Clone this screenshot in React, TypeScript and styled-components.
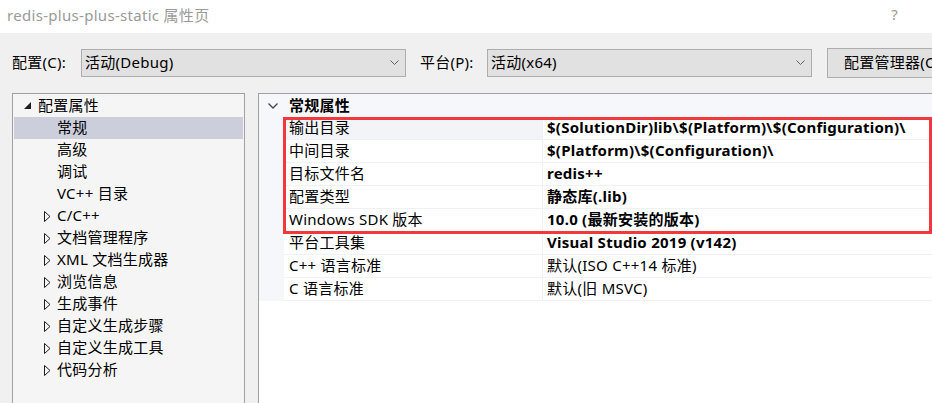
import React from "react";
import styled, { createGlobalStyle } from "styled-components";

const GlobalStyle = createGlobalStyle`
  html, body {
    margin: 0;
    padding: 0;
    background: #f0f0f0;
  }
  body {
    font-family: "Noto Sans", "Noto Sans CJK SC", sans-serif;
    font-size: 15px;
    letter-spacing: 0.25px;
    color: #000;
  }
`;

interface TreeItem {
  label: string;
  level: number;
  state: "open" | "closed" | "leaf";
  selected?: boolean;
}

interface Prop {
  name: string;
  value: string;
  custom?: boolean;
}

const treeItems: TreeItem[] = [
  { label: "配置属性", level: 0, state: "open" },
  { label: "常规", level: 1, state: "leaf", selected: true },
  { label: "高级", level: 1, state: "leaf" },
  { label: "调试", level: 1, state: "leaf" },
  { label: "VC++ 目录", level: 1, state: "leaf" },
  { label: "C/C++", level: 1, state: "closed" },
  { label: "文档管理程序", level: 1, state: "closed" },
  { label: "XML 文档生成器", level: 1, state: "closed" },
  { label: "浏览信息", level: 1, state: "closed" },
  { label: "生成事件", level: 1, state: "closed" },
  { label: "自定义生成步骤", level: 1, state: "closed" },
  { label: "自定义生成工具", level: 1, state: "closed" },
  { label: "代码分析", level: 1, state: "closed" },
];

const props: Prop[] = [
  { name: "输出目录", value: "$(SolutionDir)lib\\$(Platform)\\$(Configuration)\\", custom: true },
  { name: "中间目录", value: "$(Platform)\\$(Configuration)\\", custom: true },
  { name: "目标文件名", value: "redis++", custom: true },
  { name: "配置类型", value: "静态库(.lib)", custom: true },
  { name: "Windows SDK 版本", value: "10.0 (最新安装的版本)", custom: true },
  { name: "平台工具集", value: "Visual Studio 2019 (v142)", custom: true },
  { name: "C++ 语言标准", value: "默认(ISO C++14 标准)" },
  { name: "C 语言标准", value: "默认(旧 MSVC)" },
];

const SmallChevron = () => (
  <svg width="9" height="6" viewBox="0 0 9 6">
    <polyline points="0.5,0.5 4.5,4.5 8.5,0.5" fill="none" stroke="#606060" strokeWidth="1" />
  </svg>
);

const GroupChevron = () => (
  <svg width="10" height="6" viewBox="0 0 10 6">
    <polyline points="0.5,0.5 5,5 9.5,0.5" fill="none" stroke="#444" strokeWidth="1.3" />
  </svg>
);

const OpenArrow = () => (
  <svg width="8" height="8" viewBox="0 0 8 8">
    <polygon points="7,0 7,7 0,7" fill="#1e1e1e" />
  </svg>
);

const ClosedArrow = () => (
  <svg width="7" height="11" viewBox="0 0 7 11">
    <polygon points="0.5,0.5 6,5.5 0.5,10.5" fill="none" stroke="#1e1e1e" strokeWidth="1" />
  </svg>
);

const App: React.FC = () => {
  return (
    <Window>
      <GlobalStyle />
      <TitleBar>
        <Title>redis-plus-plus-static 属性页</Title>
        <Help>?</Help>
      </TitleBar>
      <Toolbar>
        <Label width={69}>配置(C):</Label>
        <Select>
          <Text>活动(Debug)</Text>
          <SmallChevron />
        </Select>
        <Label width={67} gap={14}>平台(P):</Label>
        <Select>
          <Text>活动(x64)</Text>
          <SmallChevron />
        </Select>
        <Button>
          <Text>配置管理器(O)...</Text>
        </Button>
      </Toolbar>
      <Body>
        <TreePanel>
          {treeItems.map((item) => (
            <TreeRow key={item.label} level={item.level} selected={item.selected}>
              <ArrowSlot>
                {item.state === "open" && <OpenArrow />}
                {item.state === "closed" && <ClosedArrow />}
              </ArrowSlot>
              <Text>{item.label}</Text>
            </TreeRow>
          ))}
        </TreePanel>
        <GridPanel>
          <Grid>
            <GroupRow>
              <Gutter>
                <GroupChevron />
              </Gutter>
              <GroupTitle>
                <Text>常规属性</Text>
              </GroupTitle>
            </GroupRow>
            {props.map((p, i) => (
              <PropRow key={p.name}>
                <Gutter />
                <NameCell active={i === 0}>
                  <Text>{p.name}</Text>
                </NameCell>
                <ValueCell custom={p.custom}>
                  <Text>{p.value}</Text>
                </ValueCell>
              </PropRow>
            ))}
          </Grid>
          <Highlight />
        </GridPanel>
      </Body>
    </Window>
  );
};

export default App;

const Window = styled.div`
  width: 932px;
  height: 403px;
  overflow: hidden;
  display: flex;
  flex-direction: column;
  background: #f0f0f0;
`;

// Noto's glyphs sit lower than Microsoft YaHei's, so lift text a little
const Text = styled.span`
  position: relative;
  top: -1.5px;
`;

const TitleBar = styled.div`
  height: 33px;
  flex: none;
  background: #fff;
  display: flex;
  align-items: center;
  justify-content: space-between;
  padding: 0 34px 0 7px;
  box-sizing: border-box;
`;

const Title = styled.span`
  position: relative;
  top: -2px;
  color: #9a9a9a;
  font-size: 15px;
  letter-spacing: 0.3px;
`;

const Help = styled.span`
  position: relative;
  top: -3px;
  color: #9a9a9a;
  font-size: 15px;
`;

const Toolbar = styled.div`
  height: 60px;
  flex: none;
  display: flex;
  align-items: center;
  padding: 0 0 0 12px;
  white-space: nowrap;
`;

const Label = styled(Text)<{ width: number; gap?: number }>`
  width: ${(p) => p.width}px;
  margin-left: ${(p) => p.gap || 0}px;
  flex: none;
`;

const Select = styled.div`
  width: 325px;
  height: 28px;
  box-sizing: border-box;
  flex: none;
  background: #e1e1e1;
  border: 1px solid #adadad;
  display: flex;
  align-items: center;
  justify-content: space-between;
  padding: 0 6px 0 3px;
  svg {
    margin-top: -1px;
  }
`;

const Button = styled.div`
  flex: none;
  margin-left: 15px;
  height: 30px;
  box-sizing: border-box;
  background: #e1e1e1;
  border: 1px solid #adadad;
  display: flex;
  align-items: center;
  padding: 0 16px;
`;

const Body = styled.div`
  flex: 1;
  display: flex;
  gap: 13px;
  padding-left: 12px;
`;

const TreePanel = styled.div`
  width: 233px;
  height: 330px;
  flex: none;
  box-sizing: border-box;
  border: 1px solid #a0a0a0;
  background: #f5f5f5;
  padding-top: 1px;
`;

const TreeRow = styled.div<{ level: number; selected?: boolean }>`
  height: 22px;
  margin: 0 1px;
  display: flex;
  align-items: center;
  padding-left: ${(p) => 6 + p.level * 19}px;
  background: ${(p) => (p.selected ? "#cccedb" : "transparent")};
  white-space: nowrap;
`;

const ArrowSlot = styled.div`
  width: 16px;
  height: 22px;
  margin-right: 2px;
  display: flex;
  align-items: center;
  justify-content: center;
`;

const GridPanel = styled.div`
  position: relative;
  width: 720px;
  height: 330px;
  flex: none;
  box-sizing: border-box;
  border: 1px solid #a0a0a0;
  background: #fff;
`;

const Grid = styled.div`
  display: grid;
  grid-template-columns: 25px 258px 1fr;
`;

const GroupRow = styled.div`
  display: contents;
  > div {
    height: 23px;
    background: #f5f7fa;
  }
`;

const Gutter = styled.div`
  background: #f5f7fa;
  display: flex;
  align-items: center;
  justify-content: center;
  padding-left: 2px;
`;

const GroupTitle = styled.div`
  grid-column: 2 / 4;
  font-weight: 700;
  display: flex;
  align-items: center;
  padding-left: 5px;
`;

const PropRow = styled.div`
  display: contents;
  > div {
    height: 23px;
    box-sizing: border-box;
  }
`;

const NameCell = styled.div<{ active?: boolean }>`
  background: ${(p) => (p.active ? "#f2f4f8" : "#fff")};
  border-bottom: 1px solid #eef1f5;
  display: flex;
  align-items: center;
  padding-left: 5px;
  white-space: nowrap;
`;

const ValueCell = styled.div<{ custom?: boolean }>`
  border-bottom: 1px solid #eef1f5;
  border-left: 1px solid #eef1f5;
  display: flex;
  align-items: center;
  padding-left: 4px;
  font-weight: ${(p) => (p.custom ? 700 : 400)};
  white-space: nowrap;
`;

const Highlight = styled.div`
  position: absolute;
  left: 24px;
  top: 23px;
  width: 649px;
  height: 117px;
  box-sizing: border-box;
  border: 3px solid #f0383d;
  pointer-events: none;
`;
